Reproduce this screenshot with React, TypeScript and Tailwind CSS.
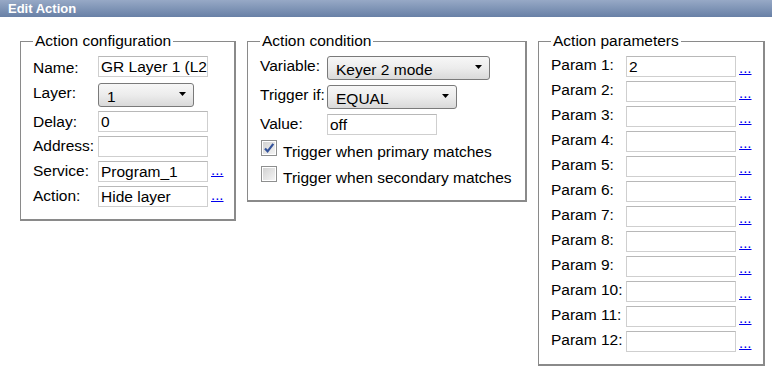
import type { ReactNode } from "react";

const FONT = "font-['Liberation_Sans',Arial,sans-serif]";

function TextBox({ value = "", width = "w-[110px]" }: { value?: string; width?: string }) {
    return (
        <div
            className={`${width} h-[21px] shrink-0 overflow-hidden whitespace-nowrap bg-white border border-[#cfcfcf] border-t-[#b8b8b8] pl-[2px] leading-[19px]`}
        >
            {value}
        </div>
    );
}

function Combo({ value, width }: { value: string; width: string }) {
    return (
        <div
            className={`${width} h-[24px] shrink-0 flex items-center justify-between rounded-[3px] border border-[#7a7a7a] bg-linear-to-b from-[#f7f7f7] via-[#ececec] to-[#d9d9d9] pl-[8px] pr-[7px]`}
        >
            <span className="pt-[4px] leading-[18px]">{value}</span>
            <svg width="7" height="4" viewBox="0 0 7 4" className="-mt-[2px]">
                <path d="M0 0H7L3.5 4Z" fill="#000" />
            </svg>
        </div>
    );
}

function More({ offset }: { offset: string }) {
    return <span className={`ml-[3px] ${offset} text-[15px] leading-[17px] text-[#0000ee] underline`}>...</span>;
}

function Row({ label, labelWidth, height, children, labelPad = "pt-[1px]" }: {
    label: string;
    labelWidth: string;
    height: string;
    children: ReactNode;
    labelPad?: string;
}) {
    return (
        <div className={`flex items-start ${height}`}>
            <span className={`${labelWidth} shrink-0 whitespace-nowrap leading-[18px] ${labelPad}`}>{label}</span>
            {children}
        </div>
    );
}

function Check({ checked, label }: { checked?: boolean; label: string }) {
    return (
        <div className="flex items-start h-[26px]">
            <div className="ml-[1px] w-[16px] h-[16px] shrink-0 border border-[#8e8f8f] p-px bg-white">
                <div className="relative w-full h-full bg-linear-to-br from-[#d2d2d2] to-[#f4f4f4]">
                    {checked && (
                        <svg viewBox="0 0 12 12" className="absolute inset-0 w-full h-full">
                            <path d="M2 6.4L4.6 9.3L10.3 1.8" fill="none" stroke="#34539a" strokeWidth="2.2" />
                        </svg>
                    )}
                </div>
            </div>
            <span className="ml-[6px] pt-[3px] leading-[18px] whitespace-nowrap">{label}</span>
        </div>
    );
}

function Group({ title, width, children }: { title: string; width: string; children: ReactNode }) {
    return (
        <fieldset
            className={`${width} shrink-0 border border-r-2 border-b-2 border-[#8a8a8a] pl-[12px] pr-[6px] pt-[6px] pb-[8px]`}
        >
            <legend className="px-[2px] leading-[18px] text-[15.5px]">{title}</legend>
            {children}
        </fieldset>
    );
}

export default function App() {
    const params = Array.from({ length: 12 }, (_, i) => ({ name: `Param ${i + 1}:`, value: i === 0 ? "2" : "" }));

    return (
        <div className={`w-[772px] h-[376px] overflow-hidden bg-white text-black text-[15.5px] ${FONT}`}>
            <div className="h-[17px] bg-linear-to-b from-[#97a9c6] to-[#6880a6] pl-[8px] text-[13px] font-bold leading-[17px] text-white">
                Edit Action
            </div>

            <div className="flex items-start pl-[20px] pt-[15px]">
                <Group title="Action configuration" width="w-[216px]">
                    <Row label="Name:" labelWidth="w-[65px]" height="h-[27px]" labelPad="pt-[3px]">
                        <TextBox value="GR Layer 1 (L2" />
                    </Row>
                    <Row label="Layer:" labelWidth="w-[65px]" height="h-[28px]">
                        <Combo value="1" width="w-[96px]" />
                    </Row>
                    <Row label="Delay:" labelWidth="w-[65px]" height="h-[25px]" labelPad="pt-[2px]">
                        <TextBox value="0" />
                    </Row>
                    <Row label="Address:" labelWidth="w-[65px]" height="h-[25px]">
                        <TextBox />
                    </Row>
                    <Row label="Service:" labelWidth="w-[65px]" height="h-[25px]">
                        <TextBox value="Program_1" />
                        <More offset="mt-0" />
                    </Row>
                    <Row label="Action:" labelWidth="w-[65px]" height="h-[25px]">
                        <TextBox value="Hide layer" />
                        <More offset="mt-0" />
                    </Row>
                </Group>

                <div className="ml-[11px]">
                    <Group title="Action condition" width="w-[280px]">
                        <Row label="Variable:" labelWidth="w-[67px]" height="h-[29px]">
                            <Combo value="Keyer 2 mode" width="w-[163px]" />
                        </Row>
                        <Row label="Trigger if:" labelWidth="w-[67px]" height="h-[29px]">
                            <Combo value="EQUAL" width="w-[130px]" />
                        </Row>
                        <Row label="Value:" labelWidth="w-[67px]" height="h-[26px]">
                            <TextBox value="off" />
                        </Row>
                        <Check checked label="Trigger when primary matches" />
                        <Check label="Trigger when secondary matches" />
                    </Group>
                </div>

                <div className="ml-[11px]">
                    <Group title="Action parameters" width="w-[227px]">
                        {params.map((p) => (
                            <Row key={p.name} label={p.name} labelWidth="w-[75px]" height="h-[25px]" labelPad="pt-0">
                                <TextBox value={p.value} />
                                <More offset="mt-[3px]" />
                            </Row>
                        ))}
                    </Group>
                </div>
            </div>
        </div>
    );
}
